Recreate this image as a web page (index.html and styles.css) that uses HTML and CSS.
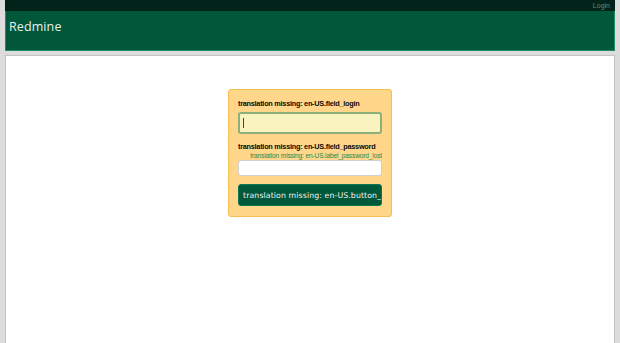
FILE: index.html
```html
<!DOCTYPE html>
<html>
<head>
<meta charset="utf-8">
<link rel="stylesheet" href="styles.css">
</head>
<body>
<div class="wrapper">
  <div class="top-menu">
    <a class="login-link" href="#">Login</a>
  </div>
  <div class="header">
    <h1 class="title">Redmine</h1>
  </div>
  <div class="main">
    <div class="login-form">
      <label class="label">translation missing: en-US.field_login</label>
      <div class="input focused"><span class="caret"></span></div>
      <label class="label pw-label">translation missing: en-US.field_password</label>
      <div class="lost-row"><a class="lost" href="#">translation missing: en-US.label_password_lost</a></div>
      <div class="input plain"></div>
      <button class="submit"><span class="submit-text">translation missing: en-US.button_login</span></button>
    </div>
  </div>
</div>
</body>
</html>
```
FILE: styles.css
```css
html, body {
  margin: 0;
  padding: 0;
  background: #dcdcdc;
  height: 100%;
}
body {
  font-family: "Liberation Sans", Arial, sans-serif;
}
.wrapper {
  margin: 0 5px;
  height: 100%;
  display: flex;
  flex-direction: column;
}
.top-menu {
  height: 11px;
  background: #01231a;
  display: flex;
  justify-content: flex-end;
  align-items: center;
  padding-right: 5px;
}
.login-link {
  color: #5f8f7d;
  font-size: 7px;
  text-decoration: none;
}
.header {
  height: 39px;
  background: #005739;
  border: 1px solid #1f8a67;
  border-top: none;
  display: flex;
  align-items: flex-start;
}
.title {
  margin: 8px 0 0 3px;
  font-family: "Open Sans", "DejaVu Sans", sans-serif;
  font-weight: normal;
  font-size: 12.5px;
  line-height: 16px;
  color: #e6f2ec;
  letter-spacing: 0.1px;
}
.main {
  flex: 1;
  margin-top: 4px;
  background: #fefefe;
  border: 1px solid #c4c4c4;
  border-bottom: none;
  display: flex;
  justify-content: center;
  align-items: flex-start;
  padding-top: 33px;
}
.login-form {
  width: 144px;
  background: #ffd68a;
  border: 1px solid #f5bf52;
  border-radius: 3px;
  padding: 9px 9px 10px 9px;
  display: flex;
  flex-direction: column;
}
.label {
  font-size: 7.3px;
  font-weight: bold;
  color: #0a0a0a;
  letter-spacing: -0.25px;
  line-height: 9px;
  white-space: nowrap;
}
.input {
  box-sizing: border-box;
  border-radius: 3px;
  margin-top: 4px;
  display: flex;
  align-items: center;
}
.focused {
  height: 22px;
  background: #f9f4bf;
  border: 2px solid #8db07a;
  padding-left: 3px;
}
.caret {
  width: 1px;
  height: 10px;
  background: #444;
}
.pw-label {
  margin-top: 8px;
}
.lost-row {
  display: flex;
  justify-content: flex-end;
  overflow: hidden;
}
.lost {
  font-size: 6.6px;
  color: #1d8a4e;
  text-decoration: none;
  white-space: nowrap;
  letter-spacing: -0.15px;
  line-height: 9px;
}
.plain {
  height: 16px;
  background: #fff;
  border: 1px solid #cfcfcf;
  margin-top: 0;
}
.submit {
  margin-top: 8px;
  height: 22px;
  box-sizing: border-box;
  background: #00583a;
  border: 1px solid #0b7a52;
  border-radius: 3px;
  color: #f2f2f2;
  font-family: "DejaVu Sans", Verdana, sans-serif;
  font-size: 7.8px;
  text-align: left;
  padding: 0 0 0 4px;
  white-space: nowrap;
  overflow: hidden;
  display: flex;
  align-items: center;
}
.submit-text {
  letter-spacing: 0.1px;
}
```
